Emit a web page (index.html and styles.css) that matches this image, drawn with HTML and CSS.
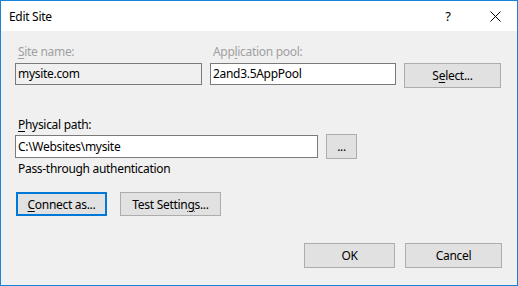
FILE: index.html
```html
<!DOCTYPE html>
<html lang="en">
<head>
  <meta charset="UTF-8">
  <title>Edit Site</title>
  <link rel="stylesheet" href="styles.css">
</head>
<body>
<div class="window">
  <div class="titlebar">
    <span class="title">Edit Site</span>
    <span class="help">?</span>
    <span class="close">
      <svg width="11" height="11" viewBox="0 0 11 11"><path d="M0.5 0.5 L10.5 10.5 M10.5 0.5 L0.5 10.5" stroke="#000" stroke-width="1" fill="none"/></svg>
    </span>
  </div>

  <div class="content">
    <div class="toprow">
      <div class="field site">
        <div class="label disabled"><u>S</u>ite name:</div>
        <div class="textbox readonly">mysite.com</div>
      </div>
      <div class="field pool">
        <div class="label disabled">App<u>l</u>ication pool:</div>
        <div class="textbox">2and3.5AppPool</div>
      </div>
      <button class="btn select">S<u>e</u>lect...</button>
    </div>

    <div class="label path-label"><u>P</u>hysical path:</div>
    <div class="pathrow">
      <div class="textbox path">C:\Websites\mysite</div>
      <button class="btn dots">...</button>
    </div>
    <div class="auth">Pass-through authentication</div>

    <div class="actions">
      <button class="btn connect"><u>C</u>onnect as...</button>
      <button class="btn test">Test Settin<u>g</u>s...</button>
    </div>

    <div class="footer">
      <button class="btn ok">OK</button>
      <button class="btn cancel">Cancel</button>
    </div>
  </div>
</div>
</body>
</html>
```

FILE: styles.css
```css
* {
  box-sizing: border-box;
}

body {
  margin: 0;
  padding: 0;
  font-family: "Noto Sans", "Liberation Sans", sans-serif;
  font-size: 12px;
  letter-spacing: -0.3px;
  color: #000;
  background: #fff;
}

.window {
  width: 518px;
  height: 286px;
  border: 1px solid #1883d7;
  background: #f0f0f0;
  display: flex;
  flex-direction: column;
}

.titlebar {
  height: 30px;
  background: #fff;
  display: flex;
  align-items: center;
  padding-left: 8px;
}

.title {
  flex: 1;
  font-size: 12px;
}

.help {
  width: 46px;
  text-align: center;
  font-size: 13px;
}

.close {
  width: 46px;
  display: flex;
  justify-content: center;
  align-items: center;
  padding-left: 2px;
}

.content {
  padding: 13px 0 0 14px;
}

.label {
  line-height: 16px;
  height: 16px;
  margin-bottom: 3px;
  padding-left: 3px;
}

.disabled {
  color: #a0a0a0;
}

u {
  text-decoration-thickness: 1px;
  text-underline-offset: 2px;
}

.toprow {
  display: flex;
  align-items: flex-start;
}

.field {
  display: flex;
  flex-direction: column;
}

.site {
  width: 187px;
  margin-right: 8px;
}

.pool {
  width: 186px;
  margin-right: 8px;
}

.textbox {
  height: 22px;
  border: 1px solid #7a7a7a;
  background: #fff;
  line-height: 20px;
  padding-left: 2px;
  white-space: nowrap;
  overflow: hidden;
}

.textbox.readonly {
  background: #f0f0f0;
}

.btn {
  font-family: inherit;
  font-size: 12px;
  letter-spacing: -0.3px;
  color: #000;
  background: #e1e1e1;
  border: 1px solid #adadad;
  height: 25px;
  padding: 0;
  margin: 0;
}

.select {
  width: 97px;
  margin-top: 19px;
}

.path-label {
  margin-top: 29px;
}

.pathrow {
  display: flex;
  align-items: center;
  margin-top: -2px;
}

.textbox.path {
  width: 303px;
  height: 23px;
  margin-right: 8px;
  line-height: 21px;
}

.dots {
  width: 31px;
}

.auth {
  margin-top: 2px;
  padding-left: 3px;
  line-height: 16px;
}

.actions {
  display: flex;
  margin-top: 15px;
  padding-left: 1px;
}

.connect {
  width: 91px;
  height: 24px;
  border: 2px solid #0078d7;
  margin-right: 13px;
}

.test {
  width: 101px;
  height: 24px;
}

.footer {
  display: flex;
  justify-content: flex-end;
  margin-top: 27px;
  padding-right: 15px;
}

.ok {
  width: 91px;
  margin-right: 10px;
}

.cancel {
  width: 97px;
}
```
